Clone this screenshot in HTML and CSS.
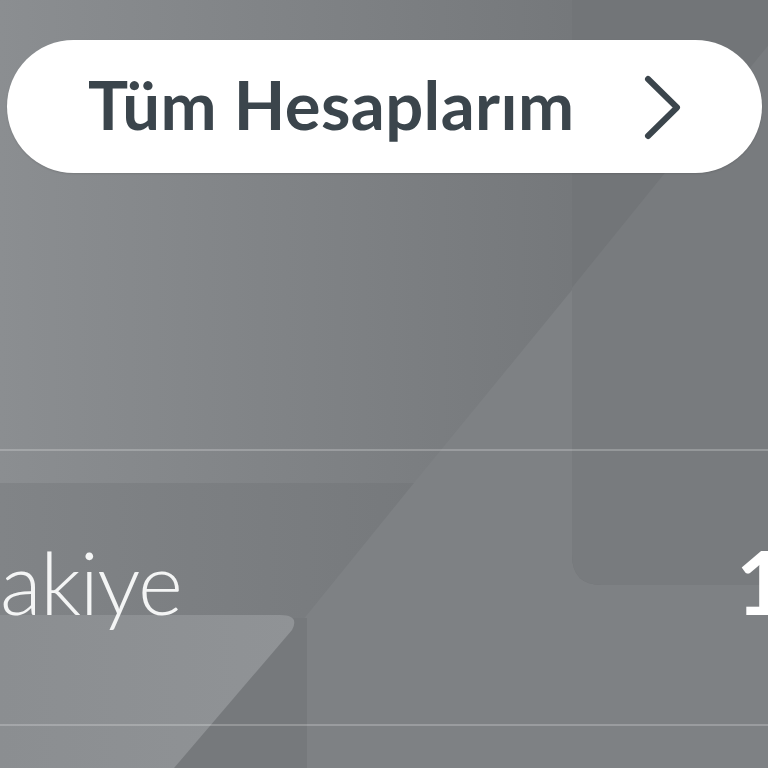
FILE: index.html
```html
<!DOCTYPE html>
<html lang="tr">
<head>
<meta charset="utf-8">
<title>Tüm Hesaplarım</title>
<link rel="stylesheet" href="styles.css">
</head>
<body>
<div class="screen">
  <svg class="bg" viewBox="0 0 768 768" preserveAspectRatio="none" aria-hidden="true">
    <defs>
      <linearGradient id="gTop" x1="0" y1="0" x2="572" y2="0" gradientUnits="userSpaceOnUse">
        <stop offset="0" stop-color="#8b8e91"/>
        <stop offset="1" stop-color="#75787b"/>
      </linearGradient>
      <linearGradient id="gBand" x1="0" y1="0" x2="420" y2="0" gradientUnits="userSpaceOnUse">
        <stop offset="0" stop-color="#818487"/>
        <stop offset="1" stop-color="#76797c"/>
      </linearGradient>
      <linearGradient id="gLight" x1="0" y1="0" x2="300" y2="0" gradientUnits="userSpaceOnUse">
        <stop offset="0" stop-color="#8b8e91"/>
        <stop offset="1" stop-color="#909396"/>
      </linearGradient>
      <clipPath id="cDark">
        <path d="M572 -10 H780 V585 H602 Q572 585 572 555 Z"/>
      </clipPath>
    </defs>
    <rect x="0" y="0" width="768" height="768" fill="#7e8184"/>
    <polygon points="0,0 572,0 572,290 414,483 0,483" fill="url(#gTop)"/>
    <polygon points="0,483 414,483 303,620 0,620" fill="url(#gBand)"/>
    <g clip-path="url(#cDark)">
      <rect x="560" y="-10" width="220" height="600" fill="#727578"/>
      <polygon points="805,0 900,0 900,768 183,768" fill="#787b7e"/>
    </g>
    <rect x="0" y="618" width="307" height="150" fill="#76797c"/>
    <path d="M0 615 H280 Q300 615 292 630 L174 768 H0 Z" fill="url(#gLight)"/>
  </svg>

  <main class="content">
    <a class="pill" href="#">
      <span class="pill-text">Tüm Hesaplarım</span>
      <svg class="chevron" viewBox="0 0 44 70" aria-hidden="true">
        <polyline points="10,7 39,35.5 10,64"/>
      </svg>
    </a>

    <div class="divider divider-top"></div>

    <section class="balance-row">
      <span class="balance-label">Bakiye</span>
      <span class="balance-amount">1.250,00 TL</span>
    </section>

    <div class="divider"></div>
  </main>
</div>
</body>
</html>
```

FILE: styles.css
```css
html, body {
  margin: 0;
  padding: 0;
}

body {
  width: 768px;
  height: 768px;
  overflow: hidden;
  background: #7e8184;
  font-family: "Lato", "Liberation Sans", sans-serif;
}

.screen {
  display: grid;
  width: 768px;
  height: 768px;
  overflow: hidden;
}

.bg,
.content {
  grid-area: 1 / 1;
}

.bg {
  width: 768px;
  height: 768px;
  display: block;
}

.content {
  display: flex;
  flex-direction: column;
  min-width: 0;
}

.pill {
  margin: 40px 6px 0 7px;
  height: 133px;
  border-radius: 67px;
  background: #ffffff;
  display: flex;
  align-items: center;
  justify-content: space-between;
  padding: 0 80px 0 81px;
  box-sizing: border-box;
  text-decoration: none;
  box-shadow: 0 1px 2px rgba(0, 0, 0, 0.12);
}

.pill-text {
  font-size: 67px;
  line-height: 67px;
  font-weight: 700;
  color: #3b454c;
  letter-spacing: 0.4px;
  padding-bottom: 4px;
  white-space: nowrap;
}

.chevron {
  width: 44px;
  height: 70px;
  display: block;
}

.chevron polyline {
  fill: none;
  stroke: #3b454c;
  stroke-width: 6;
  stroke-linecap: round;
  stroke-linejoin: round;
}

.divider {
  height: 2px;
  background: rgba(255, 255, 255, 0.22);
  flex: none;
}

.divider-top {
  margin-top: 276px;
}

.balance-row {
  height: 273px;
  box-sizing: border-box;
  padding-top: 86px;
  display: flex;
  align-items: baseline;
  margin-left: -52px;
  white-space: nowrap;
}

.balance-label {
  flex: 0 0 788px;
  font-size: 86px;
  line-height: 88px;
  font-weight: 300;
  letter-spacing: -1.5px;
  color: #f4f5f5;
}

.balance-amount {
  flex: none;
  font-size: 88px;
  line-height: 88px;
  font-weight: 700;
  color: #ffffff;
}
```
